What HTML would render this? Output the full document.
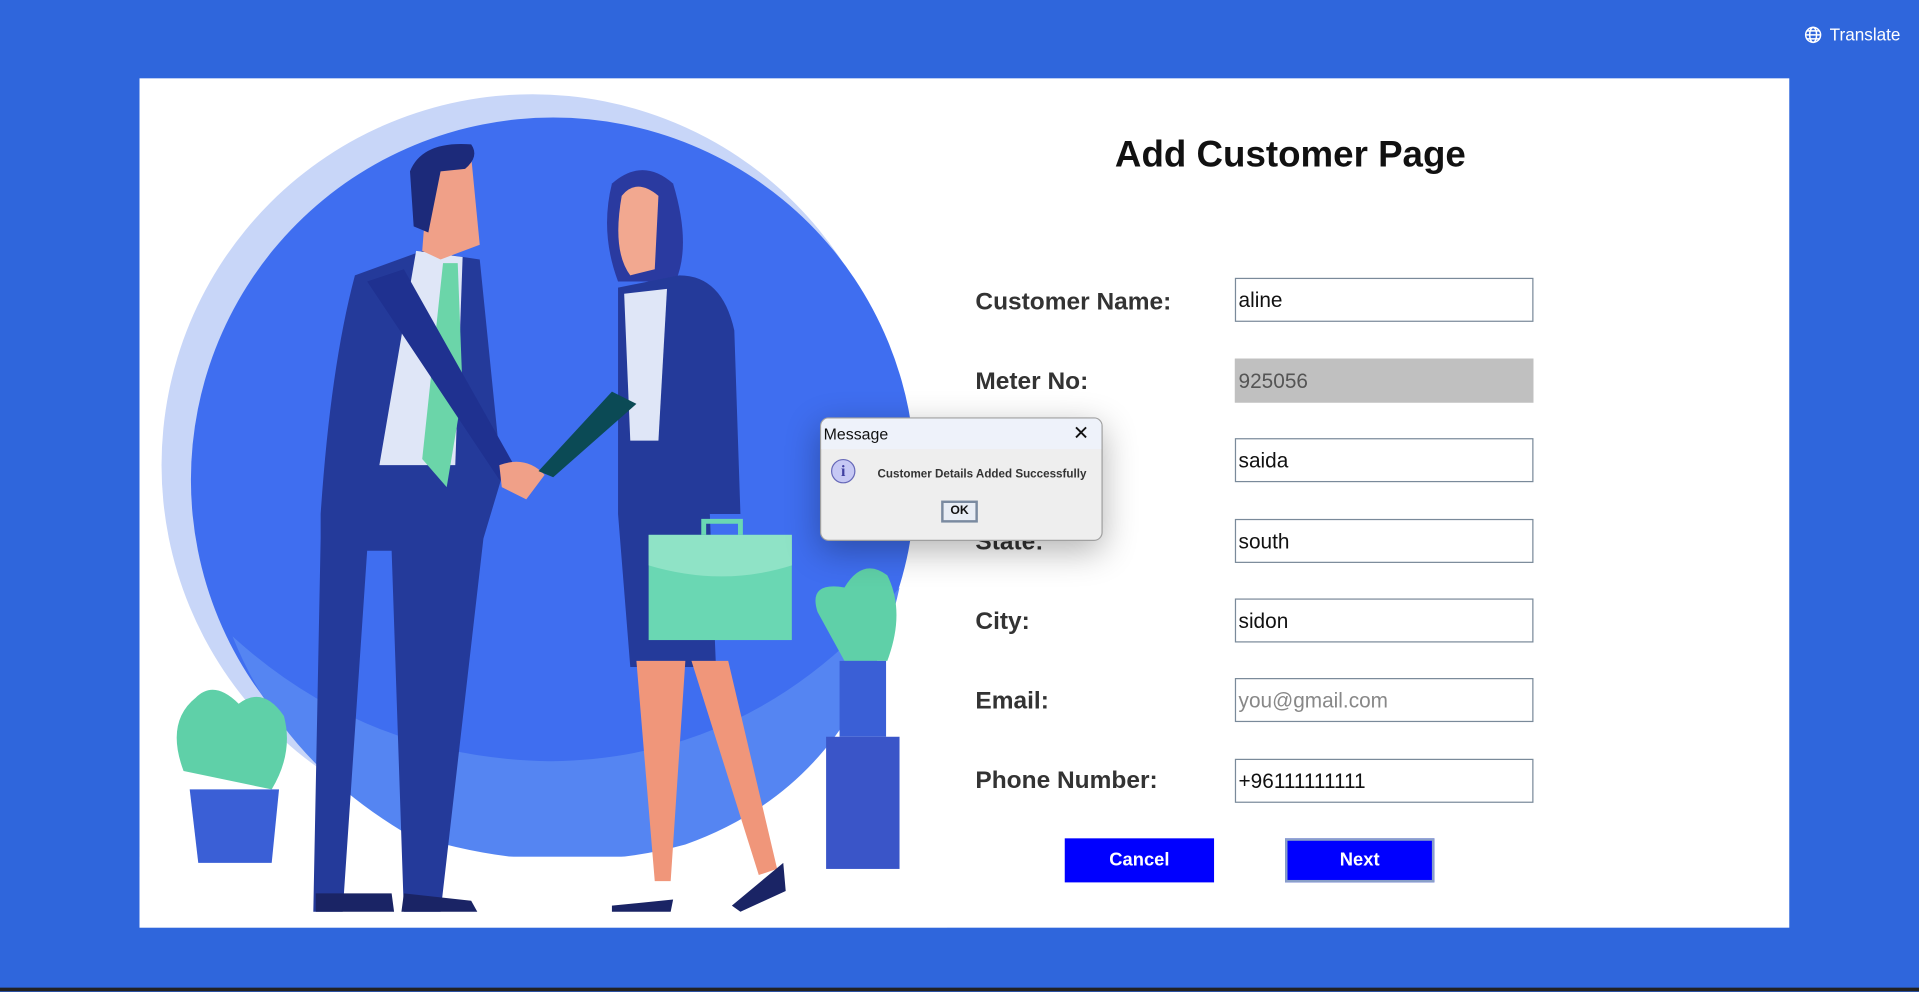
<!DOCTYPE html>
<html><head><meta charset="utf-8"><style>
html,body{margin:0;padding:0;width:1919px;height:992px;overflow:hidden;background:#2f66dc;font-family:"Liberation Sans",sans-serif}
#s{position:absolute;left:0;top:0;width:1568px;height:810px;transform:scale(1.22385);transform-origin:0 0;background:#2f66dc}
.panel{position:absolute;left:114px;top:64px;width:1348px;height:694px;background:#fff}
.title{position:absolute;left:911px;top:110px;font:bold 30px "Liberation Sans",sans-serif;color:#111}
.lbl{position:absolute;left:797px;font:bold 20px "Liberation Sans",sans-serif;color:#333}
.in{position:absolute;left:1009px;width:244px;height:36px;border:1px solid #7a8a9a;box-sizing:border-box;font:17px "Liberation Sans",sans-serif;color:#111;padding-left:2px;line-height:36px;background:#fff}
.btn{position:absolute;top:685px;width:122px;height:36px;background:#0000ff;color:#fff;font:bold 15px "Liberation Sans",sans-serif;text-align:center;line-height:36px;box-sizing:border-box}
.dlg{position:absolute;left:670px;top:341px;width:229px;height:99px;background:#eeeeee;border:1px solid #a0a0a0;border-radius:7px;box-shadow:0 8px 28px rgba(0,0,0,.3);overflow:hidden}
</style></head><body><div id="s">
<div style="position:absolute;left:0;top:807px;width:1568px;height:3px;background:#222"></div>
<div style="position:absolute;left:1474px;top:20px;color:#fff;font:14px 'Liberation Sans',sans-serif;display:flex;align-items:center;gap:6px">
<svg width="15" height="15" viewBox="0 0 16 16" fill="none" stroke="#fff" stroke-width="1.3"><circle cx="8" cy="8" r="6.5"/><ellipse cx="8" cy="8" rx="3" ry="6.5"/><path d="M1.5 8h13M2.5 4.5h11M2.5 11.5h11"/></svg>Translate</div>
<div class="panel"></div>
<svg style="position:absolute;left:114px;top:64px" width="660" height="694" viewBox="114 64 660 694">
<circle cx="435" cy="380" r="303" fill="#c8d6f8"/>
<circle cx="452" cy="392" r="296" fill="#3f6ef0"/>
<path d="M190 520 Q300 620 450 622 Q620 620 735 480 Q700 640 560 690 Q450 720 330 680 Q230 620 190 520Z" fill="#5585f2"/>
<rect x="114" y="700" width="660" height="58" fill="#fff"/>
<path d="M150 630 Q135 590 160 570 Q175 555 195 575 Q215 560 232 585 Q240 615 222 645 Z" fill="#5fd0a8"/>
<path d="M155 645 L228 645 L222 705 L162 705Z" fill="#3a5fd6"/>
<path d="M668 500 Q660 475 690 480 Q705 455 725 470 Q740 500 725 540 L690 540Z" fill="#5fd0a8"/>
<rect x="686" y="540" width="38" height="62" fill="#3a5fd6"/>
<rect x="675" y="602" width="60" height="108" fill="#3a55c8"/>
<path d="M345 205 L392 212 L410 390 L395 440 L360 745 L330 745 L320 450 L300 450 L280 745 L256 745 L262 440 L262 420 Q270 300 290 225 Z" fill="#243a9a"/>
<path d="M340 205 L378 210 L372 380 L310 380 Z" fill="#dfe6f7"/>
<path d="M362 215 L374 215 L378 320 L365 398 L345 375 Z" fill="#6bd5a9"/>
<path d="M300 230 L330 220 L420 380 L408 392 Z" fill="#1f3190"/>
<path d="M350 140 Q360 120 385 128 L392 200 L360 212 L345 205 Z" fill="#f0a088"/>
<path d="M335 140 Q345 115 385 118 Q392 128 380 138 L360 140 L350 190 L338 185 Z" fill="#1c2a7a"/>
<path d="M408 380 Q430 372 445 388 L430 408 L410 398Z" fill="#f0a088"/>
<path d="M258 730 L320 730 L322 745 L258 745Z M330 730 L385 736 L390 745 L328 745Z" fill="#1a2465"/>
<path d="M500 150 Q525 128 550 150 Q565 200 552 230 L505 230 Q490 190 500 150Z" fill="#2a3aa0"/>
<path d="M508 160 Q520 145 538 160 L535 220 L515 225 Q500 205 508 160Z" fill="#f2a890"/>
<path d="M505 235 L555 225 Q590 225 600 270 L605 420 L580 420 L585 545 L515 545 L505 420 Z" fill="#243a9a"/>
<path d="M510 240 L545 236 L538 360 L515 360 Z" fill="#dfe6f7"/>
<path d="M440 385 L500 320 L520 330 L452 390Z" fill="#0b4a55"/>
<path d="M520 540 L560 540 L548 720 L535 720 Z M565 540 L595 540 L635 710 L620 715 Z" fill="#f0967a"/>
<path d="M500 740 L550 735 L548 745 L500 745Z M598 740 L640 705 L642 728 L605 745Z" fill="#1a2465"/>
<rect x="530" y="437" width="117" height="86" fill="#6ad7b3"/>
<path d="M530 437 L647 437 L647 462 Q590 480 530 462Z" fill="#8fe3c6"/>
<path d="M575 437 L575 426 L605 426 L605 437" fill="none" stroke="#6ad7b3" stroke-width="4"/>
</svg>
<div class="title">Add Customer Page</div>
<div class="lbl" style="top:236px">Customer Name:</div><div class="in" style="top:227px">aline</div>
<div class="lbl" style="top:301px">Meter No:</div><div class="in" style="top:293px;background:#c0c0c0;border-color:#c0c0c0;color:#555">925056</div>
<div class="lbl" style="top:367px">Address:</div><div class="in" style="top:358px">saida</div>
<div class="lbl" style="top:432px">State:</div><div class="in" style="top:424px">south</div>
<div class="lbl" style="top:497px">City:</div><div class="in" style="top:489px">sidon</div>
<div class="lbl" style="top:562px">Email:</div><div class="in" style="top:554px;color:#888">you@gmail.com</div>
<div class="lbl" style="top:627px">Phone Number:</div><div class="in" style="top:620px">+96111111111</div>
<div class="btn" style="left:870px">Cancel</div>
<div class="btn" style="left:1050px;border:2px solid #8aa0c8;line-height:32px">Next</div>
<div class="dlg">
<div style="height:25px;background:#eef2fa;font:13px 'Liberation Sans',sans-serif;color:#111;line-height:25px;padding-left:2px;position:relative">Message<span style="position:absolute;right:10px;top:0;font-size:16px">✕</span></div>
<div style="position:absolute;left:8px;top:33px;width:20px;height:20px;border-radius:50%;background:#c6c8f4;border:1px solid #6668b8;box-sizing:border-box;text-align:center;font:bold 13px 'Liberation Serif',serif;color:#4040a0;line-height:18px">i</div>
<div style="position:absolute;left:46px;top:40px;font:bold 9.5px 'Liberation Sans',sans-serif;color:#333">Customer Details Added Successfully</div>
<div style="position:absolute;left:98px;top:67px;width:30px;height:18px;border:2px solid #7a8aa0;box-sizing:border-box;background:#e8edf5;font:bold 10px 'Liberation Sans',sans-serif;text-align:center;line-height:14px;color:#111">OK</div>
</div>
</div></body></html>
